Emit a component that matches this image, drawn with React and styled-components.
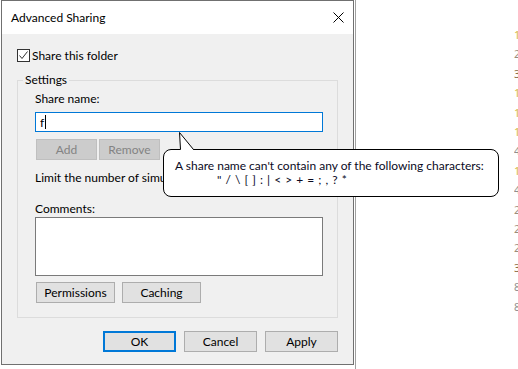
import React from "react";
import styled, { createGlobalStyle } from "styled-components";

const GlobalStyle = createGlobalStyle`
  html, body {
    margin: 0;
    padding: 0;
    background: #fff;
  }
  body {
    font-family: Lato, "Noto Sans", sans-serif;
    font-size: 12px;
    color: #000;
  }
`;

const Screen = styled.div`
  position: relative;
  display: flex;
  width: 518px;
  height: 369px;
  overflow: hidden;
  background: #fff;
`;

const Dialog = styled.div`
  box-sizing: border-box;
  width: 353px;
  height: 365px;
  margin-left: 1px;
  border: 1px solid #707070;
  background: #f0f0f0;
  display: flex;
  flex-direction: column;
`;

const TitleBar = styled.div`
  height: 32px;
  flex: none;
  background: #fff;
  display: flex;
  align-items: center;
  justify-content: space-between;
  padding: 0 9px 1px 9px;
  font-size: 12px;
`;

const Body = styled.div`
  display: flex;
  flex-direction: column;
  padding: 14px 15px 0 15px;
`;

const CheckRow = styled.label`
  display: flex;
  align-items: center;
  gap: 2px;
  height: 14px;
`;

const Box = styled.span`
  box-sizing: border-box;
  width: 13px;
  height: 13px;
  border: 1px solid #333;
  background: #fff;
  display: flex;
  align-items: center;
  justify-content: center;
`;

const Group = styled.fieldset`
  margin: 11px 0 0 0;
  padding: 4px 14px 14px 17px;
  border: 1px solid #dcdcdc;
  display: flex;
  flex-direction: column;
`;

const Legend = styled.legend`
  padding: 0 2px;
  margin-left: -12px;
  line-height: 14px;
`;

const Label = styled.div`
  line-height: 16px;
  margin-top: ${(p) => p.$top || 0}px;
  white-space: nowrap;
  overflow: hidden;
  max-width: ${(p) => (p.$clip ? `${p.$clip}px` : "none")};
`;

const TextField = styled.div`
  box-sizing: border-box;
  width: 288px;
  height: 20px;
  margin-top: 5px;
  border: 1px solid #0078d7;
  background: #fff;
  display: flex;
  align-items: center;
  padding-left: 4px;
`;

const Caret = styled.span`
  width: 1px;
  height: 14px;
  background: #000;
  margin-left: 1px;
`;

const Row = styled.div`
  display: flex;
  gap: ${(p) => p.$gap}px;
  margin-top: ${(p) => p.$top}px;
  margin-left: 1px;
`;

const Button = styled.button`
  box-sizing: border-box;
  width: ${(p) => p.$w}px;
  height: 21px;
  padding: 0;
  font: inherit;
  color: ${(p) => (p.disabled ? "#838383" : "#000")};
  background: ${(p) => (p.disabled ? "#cccccc" : "#e1e1e1")};
  border: ${(p) =>
    p.$default ? "2px solid #0078d7" : p.disabled ? "1px solid #bfbfbf" : "1px solid #adadad"};
`;

const Comments = styled.div`
  box-sizing: border-box;
  width: 288px;
  height: 59px;
  border: 1px solid #7a7a7a;
  background: #fff;
`;

const Footer = styled.div`
  display: flex;
  justify-content: flex-end;
  gap: 8px;
  margin-top: 13px;
`;

const EdgeLine = styled.div`
  width: 1px;
  margin-left: 1px;
  background: #a0a0a0;
`;

const Gutter = styled.div`
  margin-left: auto;
  width: 4px;
  overflow: hidden;
  padding-top: 25px;
  font-family: "Noto Sans", sans-serif;
  font-size: 11px;
  line-height: 19.4px;
`;

const Digit = styled.div`
  color: ${(p) => p.$c};
`;

const Balloon = styled.div`
  position: absolute;
  left: 163px;
  top: 149px;
  box-sizing: border-box;
  width: 336px;
  height: 48px;
  border: 1px solid #000;
  border-radius: 8px;
  background: #fff;
  padding: 9px 0 0 11px;
  line-height: 14px;
  color: #0a0a1e;
`;

const Chars = styled.div`
  padding-left: 42px;
  word-spacing: 1px;
`;

const Tail = styled.svg`
  position: absolute;
  left: 175px;
  top: 131px;
`;

const digits = [
  ["1", "#d6b84a"],
  ["2", "#9a8c7c"],
  ["3", "#8c6e4a"],
  ["1", "#d6b84a"],
  ["1", "#d6b84a"],
  ["1", "#d6b84a"],
  ["4", "#8f8f8f"],
  ["1", "#d6b84a"],
  ["4", "#8f8f8f"],
  ["2", "#9a8c7c"],
  ["2", "#9a8c7c"],
  ["2", "#9a8c7c"],
  ["3", "#8c6e4a"],
  ["8", "#8f8f8f"],
  ["8", "#8f8f8f"],
];

export default function App() {
  return (
    <Screen>
      <GlobalStyle />
      <Dialog>
        <TitleBar>
          <span>Advanced Sharing</span>
          <svg width="11" height="11" viewBox="0 0 11 11">
            <path d="M0.5 0.5 L10.5 10.5 M10.5 0.5 L0.5 10.5" stroke="#000" strokeWidth="1" />
          </svg>
        </TitleBar>
        <Body>
          <CheckRow>
            <Box>
              <svg width="11" height="11" viewBox="0 0 11 11">
                <polyline points="1.5,5.5 4,8.5 9.5,1.5" fill="none" stroke="#333" strokeWidth="1" />
              </svg>
            </Box>
            Share this folder
          </CheckRow>
          <Group>
            <Legend>Settings</Legend>
            <Label>Share name:</Label>
            <TextField>
              f<Caret />
            </TextField>
            <Row $gap={2} $top={7}>
              <Button $w={61} disabled>Add</Button>
              <Button $w={61} disabled>Remove</Button>
            </Row>
            <Label $top={10} $clip={128}>Limit the number of simultaneous users to:</Label>
            <Label $top={15}>Comments:</Label>
            <Comments />
            <Row $gap={7} $top={6}>
              <Button $w={79}>Permissions</Button>
              <Button $w={79}>Caching</Button>
            </Row>
          </Group>
          <Footer>
            <Button $w={73} $default>OK</Button>
            <Button $w={73}>Cancel</Button>
            <Button $w={73}>Apply</Button>
          </Footer>
        </Body>
      </Dialog>
      <EdgeLine />
      <Gutter>
        {digits.map(([d, c], i) => (
          <Digit key={i} $c={c}>{d}</Digit>
        ))}
      </Gutter>
      <Balloon>
        <div>A share name can't contain any of the following characters:</div>
        <Chars>" / \ [ ] : | &lt; &gt; + = ; , ? *</Chars>
      </Balloon>
      <Tail width="22" height="20" viewBox="0 0 22 20">
        <polygon points="4.5,1.5 5.5,19 18.5,19" fill="#fff" />
        <polyline points="5.5,18.5 4.5,1.5 18.5,18.5" fill="none" stroke="#000" strokeWidth="1" />
      </Tail>
    </Screen>
  );
}
